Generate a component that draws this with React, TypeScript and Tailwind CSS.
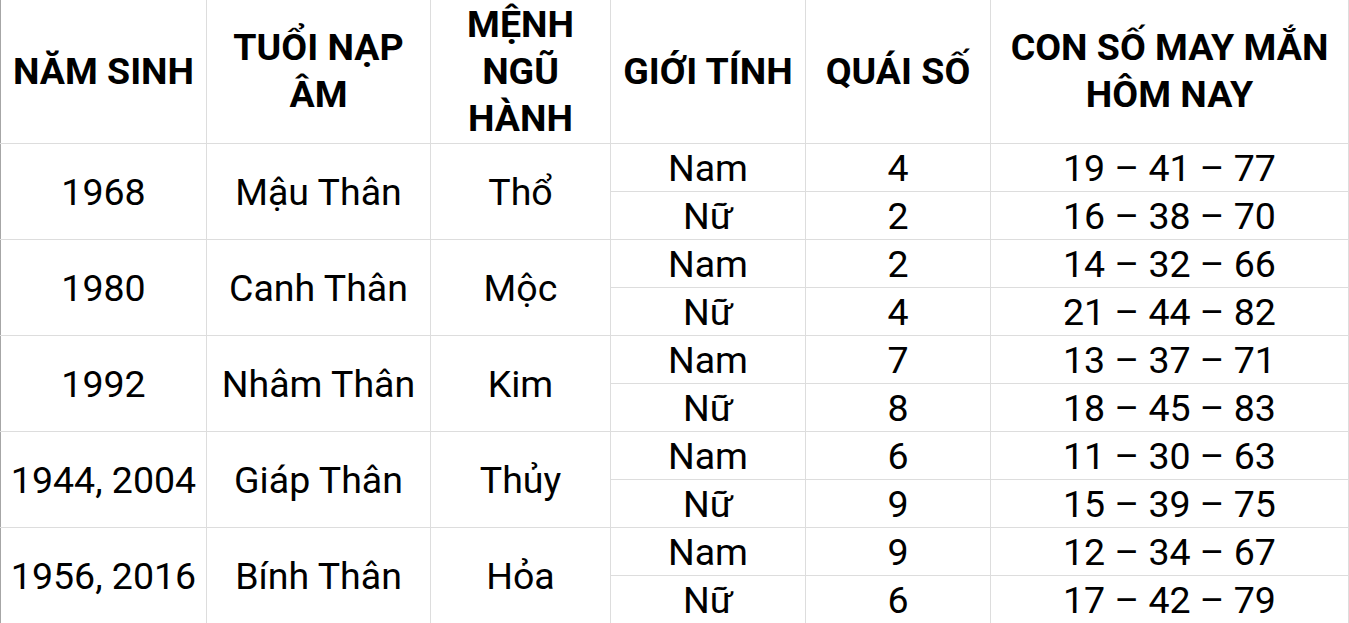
import { Fragment } from "react";

const rows = [
  { year: "1968", tuoi: "Mậu Thân", menh: "Thổ", nam: ["4", "19 – 41 – 77"], nu: ["2", "16 – 38 – 70"] },
  { year: "1980", tuoi: "Canh Thân", menh: "Mộc", nam: ["2", "14 – 32 – 66"], nu: ["4", "21 – 44 – 82"] },
  { year: "1992", tuoi: "Nhâm Thân", menh: "Kim", nam: ["7", "13 – 37 – 71"], nu: ["8", "18 – 45 – 83"] },
  { year: "1944, 2004", tuoi: "Giáp Thân", menh: "Thủy", nam: ["6", "11 – 30 – 63"], nu: ["9", "15 – 39 – 75"] },
  { year: "1956, 2016", tuoi: "Bính Thân", menh: "Hỏa", nam: ["9", "12 – 34 – 67"], nu: ["6", "17 – 42 – 79"] },
];

const th = "border border-t-0 border-[#dddddd] px-1 py-0 text-center align-middle text-[37.5px] font-bold leading-[47px]";
const td = "border border-[#dddddd] p-0 pt-[2px] text-center align-middle text-[37.5px] font-normal leading-[45px]";

export default function App() {
  return (
    <div className="h-[623px] w-[1349px] overflow-hidden bg-white text-black" style={{ fontFamily: "Roboto, 'Noto Sans', sans-serif" }}>
      <table className="w-[1348px] table-fixed border-collapse border-l border-l-[#a6a6a6]">
        <colgroup>
          <col className="w-[206px]" />
          <col className="w-[224px]" />
          <col className="w-[180px]" />
          <col className="w-[195px]" />
          <col className="w-[185px]" />
          <col className="w-[358px]" />
        </colgroup>
        <thead>
          <tr className="h-[143px]">
            <th className={th + " border-l-[#a6a6a6]"}>NĂM SINH</th>
            <th className={th}>TUỔI NẠP ÂM</th>
            <th className={th}>MỆNH NGŨ HÀNH</th>
            <th className={th}>GIỚI TÍNH</th>
            <th className={th}>QUÁI SỐ</th>
            <th className={th + " px-4"}>CON SỐ MAY MẮN HÔM NAY</th>
          </tr>
        </thead>
        <tbody>
          {rows.map((r) => (
            <Fragment key={r.year}>
              <tr className="h-[48px]">
                <td rowSpan={2} className={td + " border-l-[#a6a6a6]"}>{r.year}</td>
                <td rowSpan={2} className={td}>{r.tuoi}</td>
                <td rowSpan={2} className={td}>{r.menh}</td>
                <td className={td}>Nam</td>
                <td className={td}>{r.nam[0]}</td>
                <td className={td}>{r.nam[1]}</td>
              </tr>
              <tr className="h-[48px]">
                <td className={td}>Nữ</td>
                <td className={td}>{r.nu[0]}</td>
                <td className={td}>{r.nu[1]}</td>
              </tr>
            </Fragment>
          ))}
        </tbody>
      </table>
    </div>
  );
}
